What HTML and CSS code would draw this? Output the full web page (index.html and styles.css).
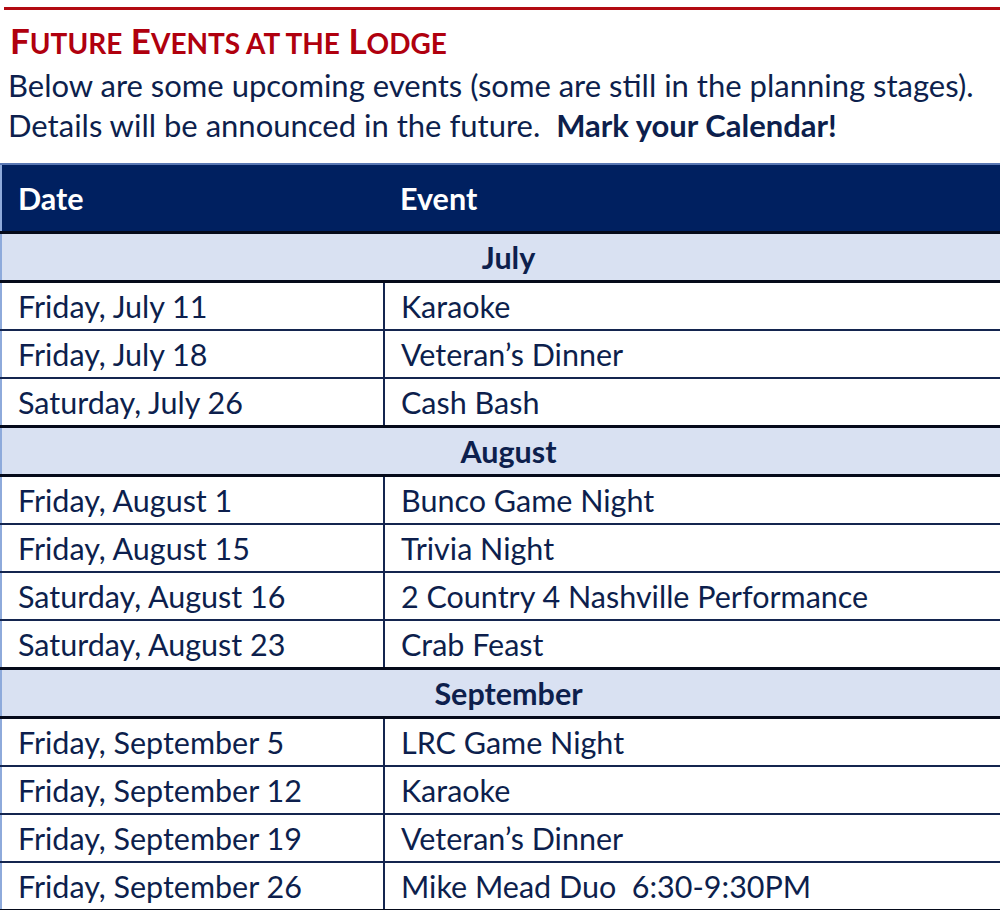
FILE: index.html
```html
<!DOCTYPE html>
<html>
<head>
<meta charset="utf-8">
<link rel="stylesheet" href="styles.css">
</head>
<body>
<div class="rule"></div>
<h1 class="title">F<span class="sc">uture</span> E<span class="sc">vents at the</span> L<span class="sc">odge</span></h1>
<p class="intro">Below are some upcoming events (some are still in the planning stages).<br>Details will be announced in the future.&nbsp; <strong>Mark your Calendar!</strong></p>
<table class="events">
  <thead>
    <tr class="head"><th class="c-date">Date</th><th class="c-event">Event</th></tr>
  </thead>
  <tbody>
    <tr class="month"><td colspan="2">July</td></tr>
    <tr><td class="c-date">Friday, July 11</td><td class="c-event">Karaoke</td></tr>
    <tr><td class="c-date">Friday, July 18</td><td class="c-event">Veteran’s Dinner</td></tr>
    <tr class="last"><td class="c-date">Saturday, July 26</td><td class="c-event">Cash Bash</td></tr>
    <tr class="month"><td colspan="2">August</td></tr>
    <tr><td class="c-date">Friday, August 1</td><td class="c-event">Bunco Game Night</td></tr>
    <tr><td class="c-date">Friday, August 15</td><td class="c-event">Trivia Night</td></tr>
    <tr><td class="c-date">Saturday, August 16</td><td class="c-event">2 Country 4 Nashville Performance</td></tr>
    <tr class="last"><td class="c-date">Saturday, August 23</td><td class="c-event">Crab Feast</td></tr>
    <tr class="month"><td colspan="2">September</td></tr>
    <tr><td class="c-date">Friday, September 5</td><td class="c-event">LRC Game Night</td></tr>
    <tr><td class="c-date">Friday, September 12</td><td class="c-event">Karaoke</td></tr>
    <tr><td class="c-date">Friday, September 19</td><td class="c-event">Veteran’s Dinner</td></tr>
    <tr class="last"><td class="c-date">Friday, September 26</td><td class="c-event">Mike Mead Duo&nbsp; 6:30-9:30PM</td></tr>
  </tbody>
</table>
</body>
</html>
```

FILE: styles.css
```css
html, body {
  margin: 0;
  padding: 0;
  background: #ffffff;
}
body {
  font-family: "Lato", "Open Sans", sans-serif;
  color: #0d1f4d;
  width: 1000px;
  overflow: hidden;
}
.rule {
  height: 3px;
  background: #b20a12;
  margin: 7px 0 0 4px;
}
.title {
  margin: 10px 0 0 10px;
  font-size: 35px;
  line-height: 40px;
  font-weight: 700;
  color: #b0000e;
  letter-spacing: 0;
}
.title .sc {
  font-size: 80%;
  text-transform: uppercase;
}
.intro {
  margin: 2px 0 0 8px;
  font-size: 31px;
  line-height: 40px;
  letter-spacing: 0px;
}
.intro strong {
  font-weight: 700;
}
.events {
  margin-top: 18px;
  width: 1000px;
  border-collapse: collapse;
  table-layout: fixed;
  font-size: 30.5px;
  border-left: 2px solid #8eaadb;
}
.events td, .events th {
  padding: 0 0 0 16px;
  text-align: left;
  vertical-align: middle;
  height: 46px;
  border-bottom: 2px solid #14254f;
}
.events .c-date {
  width: 366px;
}
.events .c-event {
  border-left: 2px solid #14254f;
}
.head th {
  background: #002060;
  color: #ffffff;
  font-weight: 700;
  height: 66px;
  border-top: 2px solid #5a78b4;
  border-bottom: 3px solid #050a1a;
}
.head th.c-event {
  border-left: none;
}
.month td {
  background: #d9e1f2;
  text-align: center;
  font-weight: 700;
  padding: 0 0 0 15px;
  height: 46px;
  border-bottom: 3px solid #050a1a;
}
.last td {
  border-bottom: 3px solid #050a1a;
}
```
